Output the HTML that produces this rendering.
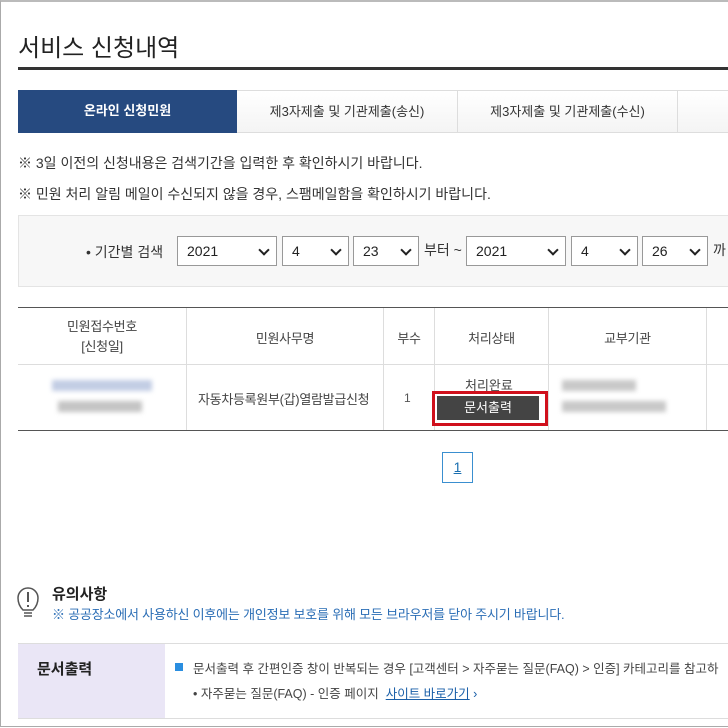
<!DOCTYPE html>
<html><head><meta charset="utf-8"><style>
*{margin:0;padding:0;box-sizing:border-box}
body{width:728px;height:728px;overflow:hidden;background:#fff;font-family:"Liberation Sans","Noto Sans CJK KR",sans-serif;color:#333;position:relative}
.frame{position:absolute;left:0;top:0;width:740px;height:727px;border:1px solid #aaa;border-top:2px solid #bbb}
.a{position:absolute;white-space:nowrap}
.sel{position:absolute;top:236px;height:30px;border:1px solid #999;background:#fff;font-size:14px;padding:6px 0 0 9px;color:#222}
.sel:after{content:"";position:absolute;right:8px;top:9px;width:6px;height:6px;border-right:2px solid #222;border-bottom:2px solid #222;transform:rotate(45deg)}
.tab{position:absolute;top:90px;height:43px;border:1px solid #ddd;border-left:none;font-size:13px;text-align:center;line-height:42px;background:linear-gradient(#fff,#f4f4f4);color:#333}
.th,.td{position:absolute;text-align:center;font-size:13px;color:#444;border-left:1px solid #ddd;letter-spacing:-0.3px}
</style></head><body>
<div class="frame"></div>
<div class="a" style="left:18px;top:28px;font-size:24px;color:#222">서비스 신청내역</div>
<div class="a" style="left:18px;top:67px;width:710px;height:3px;background:#333"></div>
<div class="tab" style="left:18px;width:219px;background:#264a80;color:#fff;border:none;font-weight:bold">온라인 신청민원</div>
<div class="tab" style="left:237px;width:221px">제3자제출 및 기관제출(송신)</div>
<div class="tab" style="left:458px;width:220px">제3자제출 및 기관제출(수신)</div>
<div class="tab" style="left:678px;width:60px"></div>
<div class="a" style="left:18px;top:153px;font-size:14px">※ 3일 이전의 신청내용은 검색기간을 입력한 후 확인하시기 바랍니다.</div>
<div class="a" style="left:18px;top:184px;font-size:14px">※ 민원 처리 알림 메일이 수신되지 않을 경우, 스팸메일함을 확인하시기 바랍니다.</div>
<div class="a" style="left:18px;top:215px;width:720px;height:72px;background:#f7f7f7;border:1px solid #e4e4e4"></div>
<div class="a" style="left:86px;top:242px;font-size:14px">• 기간별 검색</div>
<div class="sel" style="left:177px;width:100px">2021</div>
<div class="sel" style="left:282px;width:67px">4</div>
<div class="sel" style="left:353px;width:66px">23</div>
<div class="a" style="left:424px;top:240px;font-size:14px">부터 ~</div>
<div class="sel" style="left:466px;width:100px">2021</div>
<div class="sel" style="left:571px;width:67px">4</div>
<div class="sel" style="left:642px;width:66px">26</div>
<div class="a" style="left:713px;top:240px;font-size:14px">까</div>
<div class="a" style="left:18px;top:307px;width:710px;height:1px;background:#555"></div>
<div class="a" style="left:18px;top:364px;width:710px;height:1px;background:#ddd"></div>
<div class="a" style="left:18px;top:430px;width:710px;height:1px;background:#555"></div>
<div class="th" style="left:18px;top:317px;width:168px;border:none;line-height:20px">민원접수번호<br>[신청일]</div>
<div class="th" style="left:186px;top:308px;width:197px;height:122px;padding-top:20px">민원사무명</div>
<div class="th" style="left:383px;top:308px;width:51px;height:122px;padding-top:20px">부수</div>
<div class="th" style="left:434px;top:308px;width:114px;height:122px;padding-top:20px">처리상태</div>
<div class="th" style="left:548px;top:308px;width:158px;height:122px;padding-top:20px">교부기관</div>
<div class="th" style="left:706px;top:308px;width:30px;height:122px"></div>
<div class="a" style="left:52px;top:380px;width:100px;height:11px;background:#c2cde4;filter:blur(2.5px)"></div>
<div class="a" style="left:58px;top:401px;width:84px;height:11px;background:#c4c4c4;filter:blur(2.5px)"></div>
<div class="a" style="left:562px;top:380px;width:74px;height:11px;background:#c8c8c8;filter:blur(2.5px)"></div>
<div class="a" style="left:562px;top:401px;width:104px;height:11px;background:#c8c8c8;filter:blur(2.5px)"></div>
<div class="a" style="left:198px;top:389px;font-size:13px;color:#444;letter-spacing:-0.3px">자동차등록원부(갑)열람발급신청</div>
<div class="a" style="left:404px;top:391px;font-size:12px;color:#555">1</div>
<div class="a" style="left:465px;top:375px;font-size:13px;color:#444">처리완료</div>
<div class="a" style="left:432px;top:391px;width:116px;height:35px;border:3px solid #d0101c"></div>
<div class="a" style="left:437px;top:396px;width:102px;height:24px;background:#444;color:#fff;font-size:13px;text-align:center;line-height:24px">문서출력</div>
<div class="a" style="left:442px;top:452px;width:31px;height:31px;border:1px solid #3a8fd0;color:#1a6fb0;font-size:14px;text-align:center;line-height:29px;text-decoration:underline">1</div>
<svg class="a" style="left:16px;top:585px" width="24" height="36" viewBox="0 0 24 36"><path d="M7 25 C3 21 2 17 2 13 A10 10 0 0 1 22 13 C22 17 21 21 17 25 Z" fill="none" stroke="#555" stroke-width="1.5"/><path d="M8 28h8M8 31h8" stroke="#555" stroke-width="1.5"/><path d="M12 7v10M12 20v2" stroke="#555" stroke-width="2"/></svg>
<div class="a" style="left:52px;top:583px;font-size:15px;color:#222;font-weight:bold">유의사항</div>
<div class="a" style="left:52px;top:604px;font-size:13px;color:#2a6db5;letter-spacing:-0.2px">※ 공공장소에서 사용하신 이후에는 개인정보 보호를 위해 모든 브라우저를 닫아 주시기 바랍니다.</div>
<div class="a" style="left:18px;top:643px;width:720px;height:76px;border-top:1px solid #ddd;border-bottom:1px solid #ddd"></div>
<div class="a" style="left:18px;top:644px;width:147px;height:74px;background:#eae6f6"></div>
<div class="a" style="left:37px;top:658px;font-size:15px;color:#222;font-weight:bold">문서출력</div>
<div class="a" style="left:175px;top:663px;width:8px;height:8px;background:#2a8ee0"></div>
<div class="a" style="left:193px;top:658px;font-size:12.5px;color:#444">문서출력 후 간편인증 창이 반복되는 경우 [고객센터 &gt; 자주묻는 질문(FAQ) &gt; 인증] 카테고리를 참고하</div>
<div class="a" style="left:193px;top:683px;font-size:12.5px;color:#444">• 자주묻는 질문(FAQ) - 인증 페이지 &nbsp;<span style="color:#1a5fa8;text-decoration:underline">사이트 바로가기</span> <span style="color:#1a5fa8">›</span></div>
</body></html>
